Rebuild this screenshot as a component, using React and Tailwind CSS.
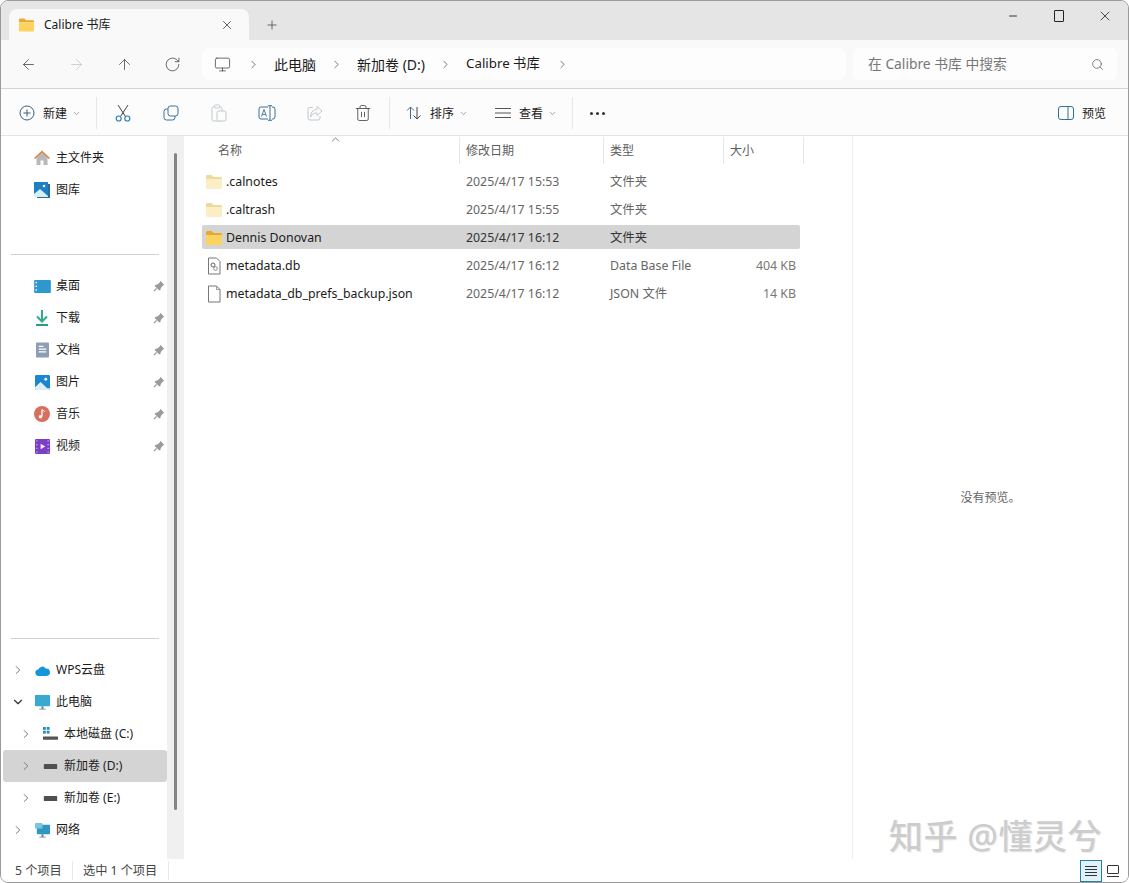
import React from "react";
import {
  ArrowLeft,
  ArrowRight,
  ArrowUp,
  RotateCw,
  Monitor,
  ChevronRight,
  ChevronDown,
  ChevronUp,
  Search,
  X,
  Plus,
  Minus,
  Trash2,
} from "lucide-react";

const font = "font-['Noto_Sans','Noto_Sans_CJK_SC',sans-serif]";

function FolderIcon({ light, className = "w-[18px] h-[16px]" }) {
  return (
    <svg viewBox="0 0 18 16" className={className}>
      <path d="M1 2.500C1 1.700 1.600 1 2.400 1h4.200l2 2H15.600c.8 0 1.400.6 1.400 1.400V5H1z" fill={light ? "#eeda9f" : "#e8a92c"} />
      <path d="M1 5h16v8.600c0 .8-.6 1.400-1.400 1.400H2.400C1.600 15 1 14.400 1 13.600z" fill={light ? "#fbeec4" : "#fcd35f"} />
    </svg>
  );
}

function DbFileIcon() {
  return (
    <svg viewBox="0 0 16 18" className="w-[16px] h-[18px]">
      <path d="M2.500 1h8l3.500 3.500v12.500h-11.500z" fill="#fff" stroke="#777" />
      <circle cx="7" cy="8" r="2" fill="none" stroke="#666" />
      <circle cx="9.500" cy="11.500" r="1.800" fill="none" stroke="#888" />
    </svg>
  );
}

function PlainFileIcon() {
  return (
    <svg viewBox="0 0 16 18" className="w-[16px] h-[18px]">
      <path d="M2.500 1h8l3.500 3.500v12.500h-11.500z" fill="#fff" stroke="#777" />
      <path d="M10.500 1v3.500h3.500" fill="none" stroke="#999" />
    </svg>
  );
}

function PinIcon() {
  return (
    <svg viewBox="0 0 12 12" className="w-3 h-3">
      <path d="M7.300 0.800l3.900 3.900-1.100.6-2.300 2.600-.4 2.200-1.200.4L1.800 6.100l.4-1.200 2.200-.4L7 2.200z" fill="#9a9a9a" />
      <path d="M3.600 8.400L1 11" stroke="#9a9a9a" strokeWidth="1.300" />
    </svg>
  );
}

function NavIcon({ kind }) {
  if (kind === "home")
    return (
      <svg viewBox="0 0 18 18" className="w-[18px] h-[18px]">
        <path d="M3.500 8L9 3l5.500 5v8h-4v-4.500h-3V16h-4z" fill="#b9b9bd" />
        <path d="M1 9l8-7.500L17 9l-1.200 1L9 3.800 2.200 10z" fill="#d98a4b" />
      </svg>
    );
  if (kind === "gallery")
    return (
      <svg viewBox="0 0 18 18" className="w-[18px] h-[18px]">
        <rect x="1" y="1" width="14" height="15" fill="#1d80c4" />
        <path d="M1 13l6-5 8 7v1H1z" fill="#d8eef7" />
        <circle cx="11" cy="5" r="1.300" fill="#fff" />
        <path d="M15 3h2v14H4v-1h11z" fill="#2a6b96" />
      </svg>
    );
  if (kind === "desktop")
    return (
      <svg viewBox="0 0 18 14" className="w-[17px] h-[13px]">
        <rect width="18" height="14" rx="1" fill="#2f97cf" />
        <rect x="1.500" y="2" width="1.500" height="1.500" fill="#fff" />
        <rect x="1.500" y="6" width="1.500" height="1.500" fill="#fff" />
        <rect x="1.500" y="10" width="1.500" height="1.500" fill="#fff" />
      </svg>
    );
  if (kind === "download")
    return (
      <svg viewBox="0 0 16 18" className="w-4 h-[18px]">
        <path d="M8 1v10" stroke="#2eaa8e" strokeWidth="2" />
        <path d="M3 7.500L8 12.500l5-5" fill="none" stroke="#2eaa8e" strokeWidth="2" />
        <path d="M2 16h12" stroke="#2d9c86" strokeWidth="2" />
      </svg>
    );
  if (kind === "docs")
    return (
      <svg viewBox="0 0 14 16" className="w-[13px] h-[16px]">
        <rect width="14" height="16" rx="1" fill="#8d9db3" />
        <path d="M3 4h5M3 7h8M3 10h8" stroke="#fff" strokeWidth="1.300" />
      </svg>
    );
  if (kind === "pictures")
    return (
      <svg viewBox="0 0 16 16" className="w-[15px] h-[15px]">
        <rect width="16" height="16" rx="1.500" fill="#1c86d1" />
        <path d="M0 13l6-5.500L13 14l3 0v.500a1.500 1.500 0 01-1.500 1.500h-13A1.500 1.500 0 010 14.500z" fill="#ddf0fa" />
        <circle cx="11.500" cy="4.500" r="1.500" fill="#fff" />
      </svg>
    );
  if (kind === "music")
    return (
      <svg viewBox="0 0 16 16" className="w-4 h-4">
        <circle cx="8" cy="8" r="8" fill="#d9705f" />
        <path d="M8 3.500v7" stroke="#fff" strokeWidth="1.300" />
        <path d="M8 3.500c1 1.200 2.500 1.200 3 2.500" fill="none" stroke="#fff" />
        <circle cx="6.500" cy="10.700" r="1.700" fill="#fff" />
      </svg>
    );
  if (kind === "video")
    return (
      <svg viewBox="0 0 16 16" className="w-[15px] h-[15px]">
        <rect width="16" height="16" rx="1" fill="#7b3fc6" />
        <path d="M6 5l5 3-5 3z" fill="#f3e8ff" />
        <path d="M1.500 2h1M1.500 6h1M1.500 10h1M1.500 14h1M13.500 2h1M13.500 6h1M13.500 10h1M13.500 14h1" stroke="#e3d2ff" strokeWidth="1.300" />
      </svg>
    );
  if (kind === "cloud")
    return (
      <svg viewBox="0 0 16 12" className="w-[15px] h-[11px]">
        <path d="M4 12a3.500 3.500 0 01-.6-7A4.500 4.500 0 0111.500 3.800 4 4 0 0112.500 12z" fill="#1795dc" />
      </svg>
    );
  if (kind === "pc")
    return (
      <svg viewBox="0 0 18 18" className="w-[17px] h-[17px]">
        <rect x="1" y="1" width="16" height="12" rx="1" fill="#39a9d0" />
        <path d="M8 13h2v2.500H8zM5.500 15.500h7v1h-7z" fill="#6a8291" />
      </svg>
    );
  if (kind === "cdrive")
    return (
      <svg viewBox="0 0 16 16" className="w-[15px] h-[15px]">
        <rect x="0" y="0" width="3" height="3" fill="#1d8fb8" />
        <rect x="4" y="0" width="3" height="3" fill="#1d8fb8" />
        <rect x="0" y="4" width="3" height="3" fill="#1d8fb8" />
        <rect x="4" y="4" width="3" height="3" fill="#1d8fb8" />
        <rect x="0" y="10" width="16" height="3.500" rx="0.500" fill="#555" />
      </svg>
    );
  if (kind === "drive")
    return (
      <svg viewBox="0 0 16 6" className="w-[15px] h-[5px]">
        <rect width="16" height="6" rx="1" fill="#4f4f4f" />
      </svg>
    );
  return (
    <svg viewBox="0 0 18 18" className="w-[17px] h-[17px]">
      <rect x="3" y="3" width="14" height="10" rx="1" fill="#2f97c4" />
      <rect x="1" y="1" width="8" height="6" rx="1" fill="#7dc3de" />
      <path d="M8 13h2v2.500H8zM5.500 15.500h7v1h-7z" fill="#6a8291" />
    </svg>
  );
}

function SideRow({ icon, label, pinned, expander, indent, selected }) {
  return (
    <div
      className={`h-8 flex items-center text-[12px] text-[#1b1b1b] rounded-[3px] ${selected ? "bg-[#d4d4d4]" : ""}`}>
      <div className={`${indent ? "w-[34px] pl-[16px]" : "w-[26px] pl-[8px]"} shrink-0 text-[#7a7a7a]`}>
        {expander === "right" && <ChevronRight size={14} strokeWidth={1.700} />}
        {expander === "down" && <ChevronDown size={14} strokeWidth={2} className="text-[#333]" />}
      </div>
      <div className="w-[27px] shrink-0 flex items-center justify-center pr-[1px]">
        <NavIcon kind={icon} />
      </div>
      <span className="flex-1 whitespace-nowrap">{label}</span>
      {pinned && (
        <span className="mr-[2px]">
          <PinIcon />
        </span>
      )}
    </div>
  );
}

function Sidebar() {
  return (
    <div className="w-[183px] shrink-0 flex">
      <div className="w-[164px] ml-[2px] shrink-0 flex flex-col justify-between pt-[6px] pb-[13px]">
        <div>
          <SideRow icon="home" label="主文件夹" />
          <SideRow icon="gallery" label="图库" />
          <div className="h-px bg-[#d2d2d2] mx-2 mt-[48px] mb-[15px]" />
          <SideRow icon="desktop" label="桌面" pinned />
          <SideRow icon="download" label="下载" pinned />
          <SideRow icon="docs" label="文档" pinned />
          <SideRow icon="pictures" label="图片" pinned />
          <SideRow icon="music" label="音乐" pinned />
          <SideRow icon="video" label="视频" pinned />
        </div>
        <div>
          <div className="h-px bg-[#d2d2d2] mx-2 mb-[15px]" />
          <SideRow icon="cloud" label="WPS云盘" expander="right" />
          <SideRow icon="pc" label="此电脑" expander="down" />
          <SideRow icon="cdrive" label="本地磁盘 (C:)" expander="right" indent />
          <SideRow icon="drive" label="新加卷 (D:)" expander="right" indent selected />
          <SideRow icon="drive" label="新加卷 (E:)" expander="right" indent />
          <SideRow icon="network" label="网络" expander="right" />
        </div>
      </div>
      <div className="flex-1 bg-[#f0f0f0] pt-[17px] pb-[49px] flex justify-center">
        <div className="w-[3px] h-full bg-[#858585] rounded-full" />
      </div>
    </div>
  );
}

const FILES = [
  { icon: "light", name: ".calnotes", date: "2025/4/17 15:53", type: "文件夹", size: "" },
  { icon: "light", name: ".caltrash", date: "2025/4/17 15:55", type: "文件夹", size: "" },
  { icon: "folder", name: "Dennis Donovan", date: "2025/4/17 16:12", type: "文件夹", size: "", selected: true },
  { icon: "db", name: "metadata.db", date: "2025/4/17 16:12", type: "Data Base File", size: "404 KB" },
  { icon: "file", name: "metadata_db_prefs_backup.json", date: "2025/4/17 16:12", type: "JSON 文件", size: "14 KB" },
];

function FileRow({ file }) {
  return (
    <div
      className={`h-6 w-[598px] pt-[2px] grid grid-cols-[264px_144px_120px_70px] items-center text-[12.35px] rounded-[2px] ${file.selected ? "bg-[#d4d4d4]" : ""}`}>
      <div className="flex items-center text-[#1b1b1b]">
        <span className="w-[24px] flex justify-center">
          {file.icon === "light" && <FolderIcon light />}
          {file.icon === "folder" && <FolderIcon />}
          {file.icon === "db" && <DbFileIcon />}
          {file.icon === "file" && <PlainFileIcon />}
        </span>
        <span className="whitespace-nowrap">{file.name}</span>
      </div>
      <span className={file.selected ? "text-[#333]" : "text-[#666]"}>{file.date}</span>
      <span className={file.selected ? "text-[#333]" : "text-[#666]"}>{file.type}</span>
      <span className="text-right pr-1 text-[#777]">{file.size}</span>
    </div>
  );
}

function FileList() {
  return (
    <div className="flex-1 relative pl-[18px]">
      <ChevronUp size={13} strokeWidth={1.500} className="absolute left-[145px] top-[-3px] text-[#666]" />
      <div className="flex h-7 pt-[1px] text-[12px] text-[#5c5c5c] mb-[5px]">
        <div className="w-[258px] pl-4 border-r border-[#e6e6e6] flex items-center">名称</div>
        <div className="w-[144px] pl-[6px] border-r border-[#e6e6e6] flex items-center">修改日期</div>
        <div className="w-[120px] pl-[6px] border-r border-[#e6e6e6] flex items-center">类型</div>
        <div className="w-[80px] pl-[6px] border-r border-[#e6e6e6] flex items-center">大小</div>
      </div>
      <div className="flex flex-col gap-1">
        {FILES.map((f) => (
          <FileRow key={f.name} file={f} />
        ))}
      </div>
    </div>
  );
}

function ToolBtn({ children, dim }) {
  return (
    <div className={`w-12 flex items-center justify-center ${dim ? "text-[#c3c9ce]" : "text-[#3c6f96]"}`}>
      {children}
    </div>
  );
}

function Toolbar() {
  const divider = <div className="w-px h-[32px] bg-[#e8e8e8]" />;
  return (
    <div className="h-[47px] shrink-0 pt-[2px] bg-[#fcfcfc] border-b border-[#e4e4e4] flex items-center text-[12px] text-[#1b1b1b]">
      <div className="w-[95px] flex items-center pl-[18px]">
        <svg viewBox="0 0 16 16" className="w-4 h-4 text-[#3a5f7c]">
          <circle cx="8" cy="8" r="7" fill="none" stroke="currentColor" />
          <path d="M8 4.500v7M4.500 8h7" stroke="currentColor" />
        </svg>
        <span className="ml-2 pt-[2px]">新建</span>
        <ChevronDown size={9} className="ml-[5px] text-[#888]" />
      </div>
      {divider}
      <div className="w-[2px]" />
      <ToolBtn>
        <svg viewBox="0 0 16 18" className="w-4 h-[18px]" fill="none">
          <path d="M3 1l7.500 11.500M13 1L5.500 12.500" stroke="#444" />
          <circle cx="3.700" cy="14.500" r="2.500" stroke="#2f7fb5" strokeWidth="1.200" />
          <circle cx="12.300" cy="14.500" r="2.500" stroke="#2f7fb5" strokeWidth="1.200" />
        </svg>
      </ToolBtn>
      <ToolBtn>
        <svg viewBox="0 0 16 16" className="w-4 h-4" fill="none" stroke="currentColor">
          <rect x="5" y="1" width="10" height="10" rx="2.500" />
          <path d="M5 4H3.500A2.500 2.500 0 001 6.500v6A2.500 2.500 0 003.500 15h6a2.500 2.500 0 002.500-2.500V11" />
        </svg>
      </ToolBtn>
      <ToolBtn dim>
        <svg viewBox="0 0 16 18" className="w-4 h-[18px]" fill="none" stroke="currentColor">
          <rect x="1" y="3" width="10" height="14" rx="1.500" />
          <rect x="6" y="7" width="9" height="10" rx="1.500" fill="#fcfcfc" />
          <rect x="3.500" y="1" width="5" height="3" rx="1" fill="#fcfcfc" />
        </svg>
      </ToolBtn>
      <ToolBtn>
        <svg viewBox="0 0 18 16" className="w-[18px] h-4" fill="none" stroke="currentColor">
          <path d="M10 2H3a2 2 0 00-2 2v8a2 2 0 002 2h7M14 2h1a2 2 0 012 2v8a2 2 0 01-2 2h-1" />
          <path d="M12 1v14M10 .7h4M10 15.300h4" />
          <path d="M3.500 11.500l2.500-7 2.500 7M4.500 9.500h3" strokeWidth="0.900" />
        </svg>
      </ToolBtn>
      <ToolBtn dim>
        <svg viewBox="0 0 16 16" className="w-4 h-4" fill="none" stroke="currentColor">
          <path d="M10 1.500L15 6l-5 4.500V8C7 8 5 9 3.500 12c0-4 2-7 6.500-7.500z" />
          <path d="M6 2.500H3a2 2 0 00-2 2v8.500a2 2 0 002 2h8a2 2 0 002-2v-2" />
        </svg>
      </ToolBtn>
      <ToolBtn>
        <Trash2 size={18} strokeWidth={1.100} className="text-[#444]" />
      </ToolBtn>
      <div className="w-[2px]" />
      {divider}
      <div className="flex items-center ml-[16px] w-[67px]">
        <svg viewBox="0 0 16 14" className="w-4 h-[14px] text-[#3c6f96]" fill="none" stroke="currentColor">
          <path d="M4.500 13V1M1 4.500L4.500 1 8 4.500" />
          <path d="M11 1v12M7.500 9.500L11 13l3.500-3.500" stroke="#444" />
        </svg>
        <span className="ml-[8px] pt-[2px]">排序</span>
        <ChevronDown size={9} className="ml-[5px] text-[#888]" />
      </div>
      <div className="flex items-center ml-[22px] w-[69px]">
        <svg viewBox="0 0 16 12" className="w-4 h-3 text-[#555]" fill="none" stroke="currentColor">
          <path d="M0 1.500h16M0 6h16M0 10.500h16" />
        </svg>
        <span className="ml-2 pt-[2px]">查看</span>
        <ChevronDown size={9} className="ml-[5px] text-[#888]" />
      </div>
      <div className="w-[8px]" />
      {divider}
      <div className="ml-[17px] flex gap-[3px]">
        <span className="w-[3px] h-[3px] rounded-full bg-[#333]" />
        <span className="w-[3px] h-[3px] rounded-full bg-[#333]" />
        <span className="w-[3px] h-[3px] rounded-full bg-[#333]" />
      </div>
      <div className="ml-auto flex items-center pr-[22px]">
        <svg viewBox="0 0 16 14" className="w-4 h-[14px] text-[#2f6f9e]" fill="none" stroke="currentColor">
          <rect x="0.500" y="0.500" width="15" height="13" rx="2.500" />
          <path d="M10 .5v13" />
        </svg>
        <span className="ml-2 pt-[2px]">预览</span>
      </div>
    </div>
  );
}

function AddressRow() {
  const crumb = (label, size) => (
    <>
      <ChevronRight size={13} strokeWidth={1.300} className="text-[#444] mx-[14px]" />
      <span className={`whitespace-nowrap ${size}`}>{label}</span>
    </>
  );
  return (
    <div className="h-[49px] shrink-0 bg-[#f9f9f9] border-b border-[#d4d4d4] flex items-center text-[#444]">
      <div className="w-[201px] flex pl-[3px]">
        {[ArrowLeft, ArrowRight, ArrowUp, RotateCw].map((Icon, i) => (
          <div key={i} className="w-12 flex justify-center">
            <Icon size={17} strokeWidth={1.100} className={i === 1 ? "text-[#c4c4c4]" : ""} />
          </div>
        ))}
      </div>
      <div className="w-[644px] h-8 bg-[#fdfdfd] rounded-md flex items-center pl-[12px] text-[#1b1b1b]">
        <Monitor size={17} strokeWidth={1.100} className="text-[#444] mr-[2px]" />
        {crumb("此电脑", "text-[14px]")}
        {crumb("新加卷 (D:)", "text-[14px]")}
        {crumb("Calibre 书库", "text-[13.3px]")}
        <ChevronRight size={13} strokeWidth={1.300} className="text-[#444] ml-[16px]" />
      </div>
      <div className="w-[264px] h-8 ml-[7px] bg-[#fdfdfd] rounded-md flex items-center justify-between pl-[15px] pr-[13px] text-[13.8px] text-[#777]">
        <span>在 Calibre 书库 中搜索</span>
        <Search size={13} strokeWidth={1.300} className="text-[#555]" />
      </div>
    </div>
  );
}

function TitleBar() {
  return (
    <div className="h-[39px] shrink-0 bg-[#e5e5e5] flex items-end relative">
      <div className="ml-[8px] w-[240px] h-[31px] bg-[#f9f9f9] rounded-t-lg flex items-center pl-[9px] pr-[15px] text-[12px] text-[#1b1b1b]">
        <FolderIcon className="w-[17px] h-[16px]" />
        <span className="ml-[9px] flex-1">Calibre 书库</span>
        <X size={14} strokeWidth={1.300} className="text-[#333]" />
      </div>
      <div className="ml-[16px] h-[31px] flex items-center text-[#444]">
        <Plus size={14} strokeWidth={1.300} />
      </div>
      <div className="ml-auto self-start h-[29px] flex items-center text-[#222]">
        <div className="w-[46px] flex justify-center">
          <Minus size={12} strokeWidth={1.800} />
        </div>
        <div className="w-[46px] flex justify-center">
          <div className="w-[10px] h-[12px] border border-[#222] rounded-[1px]" />
        </div>
        <div className="w-[46px] flex justify-center pr-[1px]">
          <X size={16} strokeWidth={1.200} />
        </div>
      </div>
    </div>
  );
}

function StatusBar() {
  return (
    <div className="h-[23px] shrink-0 bg-white flex items-center text-[12.2px] text-[#444]">
      <span className="pl-[14px] w-[72px] pt-px border-r border-[#e8e8e8]">5 个项目</span>
      <span className="pl-[10px] w-[96px] pt-px border-r border-[#e8e8e8]">选中 1 个项目</span>
      <div className="ml-auto flex items-center pr-[8px] gap-[3px]">
        <div className="w-[22px] h-[22px] bg-[#dff1fa] border border-[#2a7f9e] flex items-center justify-center">
          <svg viewBox="0 0 14 12" className="w-[14px] h-3" fill="none" stroke="#333">
            <path d="M1 1.500h12M1 4.500h12M1 7.500h12M1 10.500h12" />
          </svg>
        </div>
        <div className="w-[15px] h-[22px] flex items-center justify-center">
          <svg viewBox="0 0 14 14" className="w-[14px] h-[14px]" fill="none" stroke="#333">
            <rect x="1.500" y="1.500" width="11" height="8" rx="0.500" />
            <path d="M1 12.500h12" />
          </svg>
        </div>
      </div>
    </div>
  );
}

export default function App() {
  return (
    <div className={`${font} w-[1129px] h-[883px] bg-white`}>
      <div className="relative w-full h-full flex flex-col overflow-hidden rounded-lg border border-[#9a9a9a]">
        <TitleBar />
        <AddressRow />
        <Toolbar />
        <div className="flex-1 flex min-h-0">
          <Sidebar />
          <FileList />
          <div className="w-[276px] shrink-0 border-l border-[#eeeeee] flex items-center justify-center text-[12px] text-[#666]">
            没有预览。
          </div>
        </div>
        <StatusBar />
        <div className="absolute left-[888px] top-[813px] text-[34px] leading-[44px] tracking-[0.5px] text-[#cdcdcd] font-medium whitespace-nowrap [text-shadow:1px_1px_0_#eeeeee]">
          知乎 @懂灵兮
        </div>
      </div>
    </div>
  );
}
